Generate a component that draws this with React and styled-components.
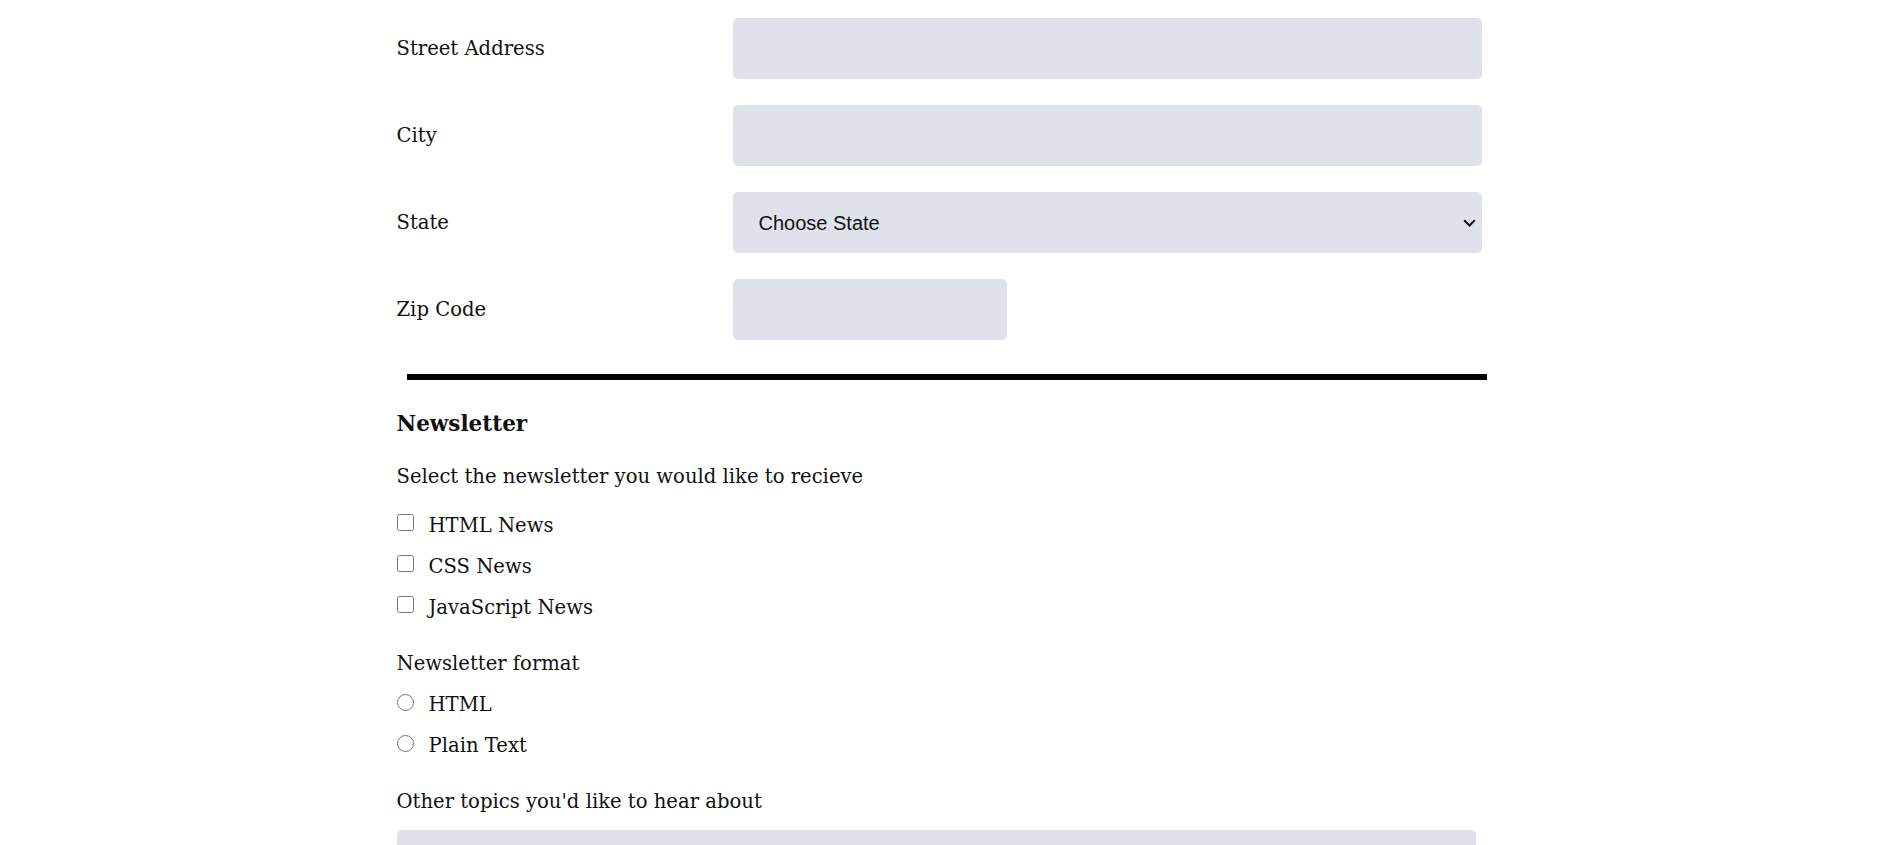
import React from 'react';
import styled, { createGlobalStyle } from 'styled-components';

const GlobalStyle = createGlobalStyle`
  body {
    margin: 0;
    background: #ffffff;
    font-family: 'DejaVu Serif', 'Liberation Serif', serif;
    color: #111;
  }
`;

const Form = styled.form`
  width: 1085px;
  margin: 0 auto;
  padding-top: 18px;
  font-size: 19.6px;
`;

const Row = styled.div`
  display: grid;
  grid-template-columns: 336px 1fr;
  align-items: center;
  height: 61px;
  margin-bottom: 26px;
  &:last-of-type { margin-bottom: 0; }
`;

const Label = styled.label`
  line-height: 1;
`;

const Field = styled.input`
  box-sizing: border-box;
  height: 61px;
  width: ${(p) => p.width || '100%'};
  border: none;
  border-radius: 5px;
  background: #dfe2ea;
  font-size: 20px;
  padding: 0 20px;
  outline: none;
`;

const SelectWrap = styled.div`
  position: relative;
  display: flex;
`;

const Select = styled.select`
  appearance: none;
  box-sizing: border-box;
  height: 61px;
  width: 100%;
  border: none;
  border-radius: 5px;
  background: #dfe2ea;
  font-family: 'Liberation Sans', Arial, sans-serif;
  font-size: 20px;
  color: #111;
  padding: 0 30px 0 26px;
  outline: none;
`;

const Chevron = styled.svg`
  position: absolute;
  right: 6px;
  top: 27px;
  width: 13px;
  height: 8px;
  pointer-events: none;
`;

const Rule = styled.hr`
  border: none;
  height: 6px;
  background: #000;
  width: 1080px;
  margin: 34px 0 0 10px;
`;

const Heading = styled.h2`
  font-size: 21.5px;
  font-weight: bold;
  line-height: 41px;
  margin: 23px 0 0;
`;

const Text = styled.p`
  line-height: 41px;
  margin: ${(p) => p.top || 0}px 0 ${(p) => p.bottom || 0}px;
`;

const Option = styled.label`
  display: flex;
  align-items: flex-start;
  gap: 15px;
  line-height: 41px;
  height: 41px;
`;

const Box = styled.input`
  width: 17px;
  height: 17px;
  margin: ${(p) => (p.type === 'radio' ? 10 : 9)}px 0 0;
`;

const TextArea = styled.textarea`
  display: block;
  box-sizing: border-box;
  width: 1079px;
  height: 160px;
  margin-top: 8px;
  border: none;
  border-radius: 5px;
  background: #dfe2ea;
  resize: none;
`;

const App = () => {
  return (
    <>
      <GlobalStyle />
      <Form>
        <Row>
          <Label htmlFor="street">Street Address</Label>
          <Field id="street" type="text" />
        </Row>
        <Row>
          <Label htmlFor="city">City</Label>
          <Field id="city" type="text" />
        </Row>
        <Row>
          <Label htmlFor="state">State</Label>
          <SelectWrap>
            <Select id="state" defaultValue="">
              <option value="">Choose State</option>
            </Select>
            <Chevron viewBox="0 0 13 8" aria-hidden="true">
              <path d="M1.2 1.2 L6.5 6.5 L11.8 1.2" fill="none" stroke="#111" strokeWidth="2" />
            </Chevron>
          </SelectWrap>
        </Row>
        <Row>
          <Label htmlFor="zip">Zip Code</Label>
          <Field id="zip" type="text" width="274px" />
        </Row>
        <Rule />
        <Heading>Newsletter</Heading>
        <Text top={12} bottom={8}>Select the newsletter you would like to recieve</Text>
        {['HTML News', 'CSS News', 'JavaScript News'].map((item) => (
          <Option key={item}>
            <Box type="checkbox" name="news" />
            {item}
          </Option>
        ))}
        <Text top={15}>Newsletter format</Text>
        {['HTML', 'Plain Text'].map((item) => (
          <Option key={item}>
            <Box type="radio" name="format" />
            {item}
          </Option>
        ))}
        <Text top={15}>Other topics you'd like to hear about</Text>
        <TextArea />
      </Form>
    </>
  );
};

export default App;
